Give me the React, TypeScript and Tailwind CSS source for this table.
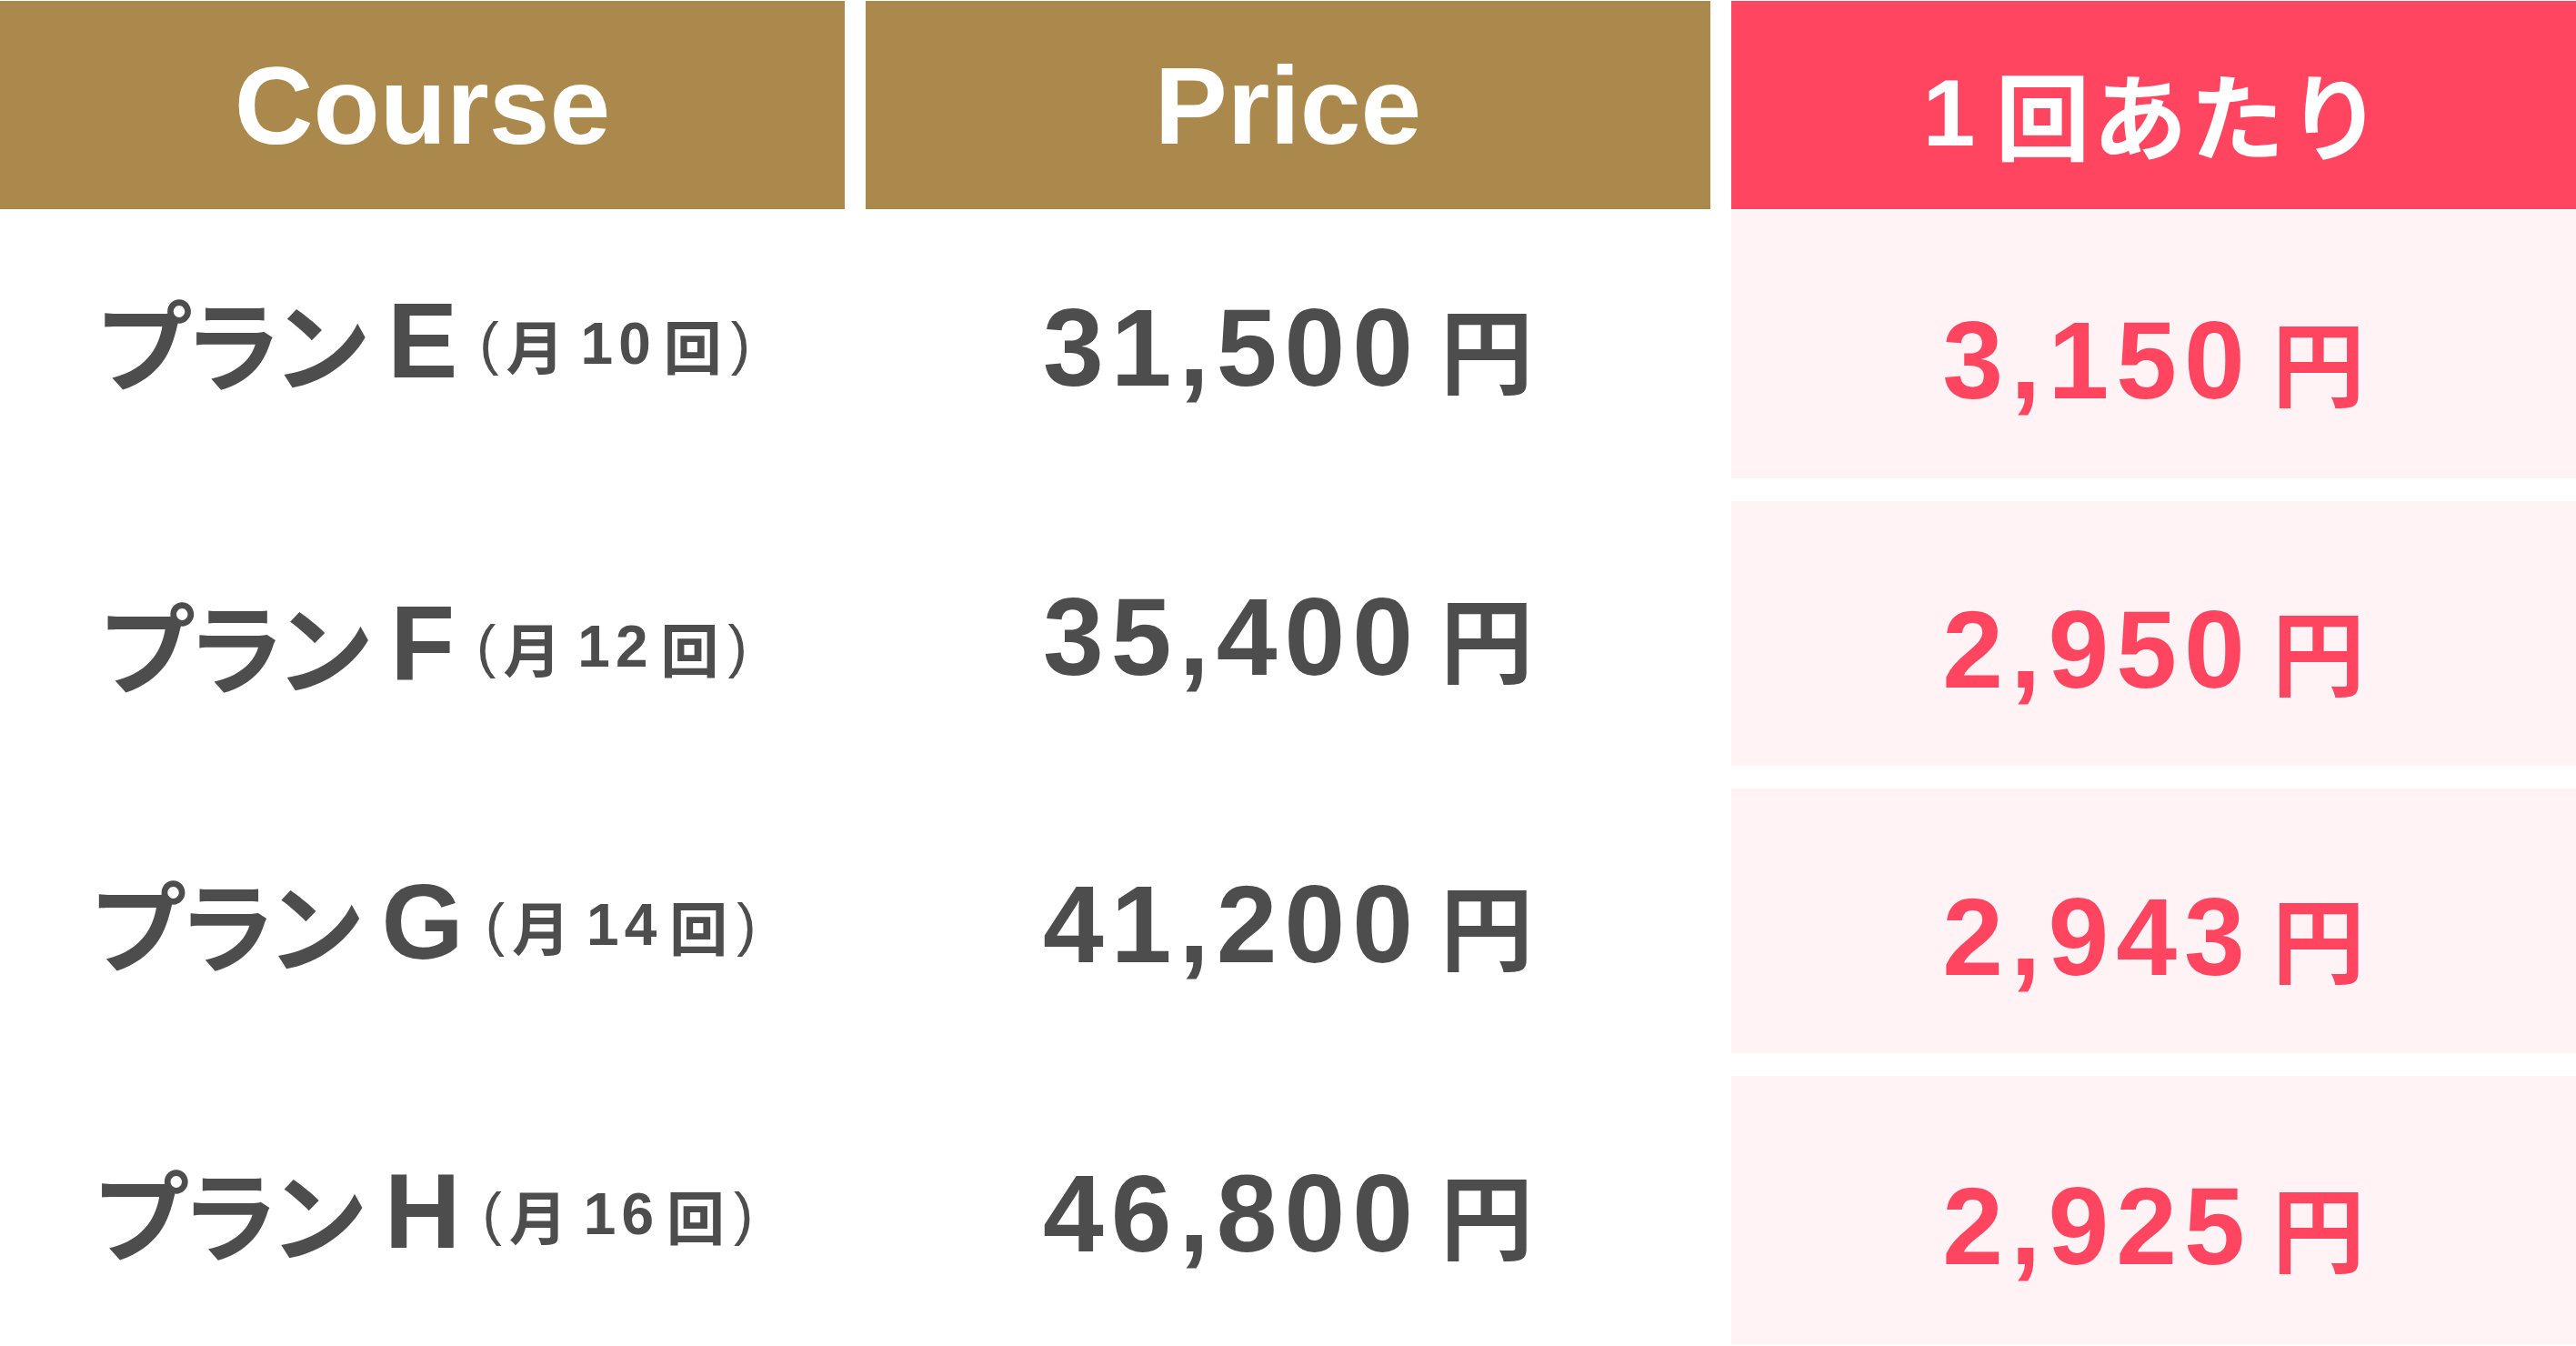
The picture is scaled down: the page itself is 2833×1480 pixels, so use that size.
import React from 'react';

interface Plan {
  name: string;
  letter: string;
  count: string;
  price: string;
  perVisit: string;
  h: string;
  shift: string;
}

const plans: Plan[] = [
  { name: 'プラン', letter: 'E', count: '10', price: '31,500', perVisit: '3,150', h: 'h-[295px]', shift: 'pb-[8px]' },
  { name: 'プラン', letter: 'F', count: '12', price: '35,400', perVisit: '2,950', h: 'h-[291px]', shift: 'pt-[22px]' },
  { name: 'プラン', letter: 'G', count: '14', price: '41,200', perVisit: '2,943', h: 'h-[291px]', shift: 'pt-[2px]' },
  { name: 'プラン', letter: 'H', count: '16', price: '46,800', perVisit: '2,925', h: 'h-[295px]', shift: 'pt-[2px]' },
];

const latin = "font-['Liberation_Sans','Noto_Sans_CJK_JP',sans-serif]";
const cjk = "font-['Noto_Sans_CJK_JP',sans-serif]";

function Amount({ value, color }: { value: string; color: string }) {
  return (
    <div className={`flex items-center ${color}`}>
      <span className={`${latin} text-[120px] font-bold leading-none tracking-[8px]`}>{value}</span>
      <span className={`${cjk} text-[102px] font-bold leading-none ml-[22px]`}>円</span>
    </div>
  );
}

export default function App() {
  return (
    <div className="w-[2833px] h-[1480px] bg-white overflow-hidden">
      {/* Header */}
      <div className="grid grid-cols-3 gap-x-[23px] h-[229px] mt-px">
        <div className="bg-[#ab884b] flex items-center justify-center">
          <span className={`${latin} text-white text-[120px] font-bold leading-none`}>Course</span>
        </div>
        <div className="bg-[#ab884b] flex items-center justify-center">
          <span className={`${latin} text-white text-[120px] font-bold leading-none`}>Price</span>
        </div>
        <div className="bg-[#ff4560] flex items-center justify-center pt-[16px] text-white">
          <span className={`${latin} text-[104px] font-bold leading-none`}>1</span>
          <span className={`${cjk} text-[104px] font-bold leading-none ml-[22px] tracking-[3px]`}>回あたり</span>
        </div>
      </div>

      {/* Rows */}
      <div className="flex flex-col gap-y-[25px] mt-px">
        {plans.map((p) => (
          <div key={p.letter} className={`grid grid-cols-3 gap-x-[23px] ${p.h}`}>
            <div className={`flex items-center justify-center text-[#4d4d4d] ${p.shift}`}>
              <span className={`${cjk} text-[108px] font-bold leading-none tracking-[-10px]`}>{p.name}</span>
              <span className={`${latin} text-[116px] font-bold leading-none ml-[28px]`}>{p.letter}</span>
              <span className={`${latin} text-[64px] font-bold leading-none ml-[24px] flex items-center pt-[6px]`}>
                <span className="font-normal">(</span>
                <span className={`${cjk} ml-[8px]`}>月</span>
                <span className="ml-[18px] tracking-[6px]">{p.count}</span>
                <span className={`${cjk} ml-[8px]`}>回</span>
                <span className="font-normal ml-[10px]">)</span>
              </span>
            </div>
            <div className="flex items-center justify-center pt-[6px]">
              <Amount value={p.price} color="text-[#4d4d4d]" />
            </div>
            <div className="bg-[#fff3f5] flex items-center justify-center pt-[34px]">
              <Amount value={p.perVisit} color="text-[#ff4560]" />
            </div>
          </div>
        ))}
      </div>
    </div>
  );
}
